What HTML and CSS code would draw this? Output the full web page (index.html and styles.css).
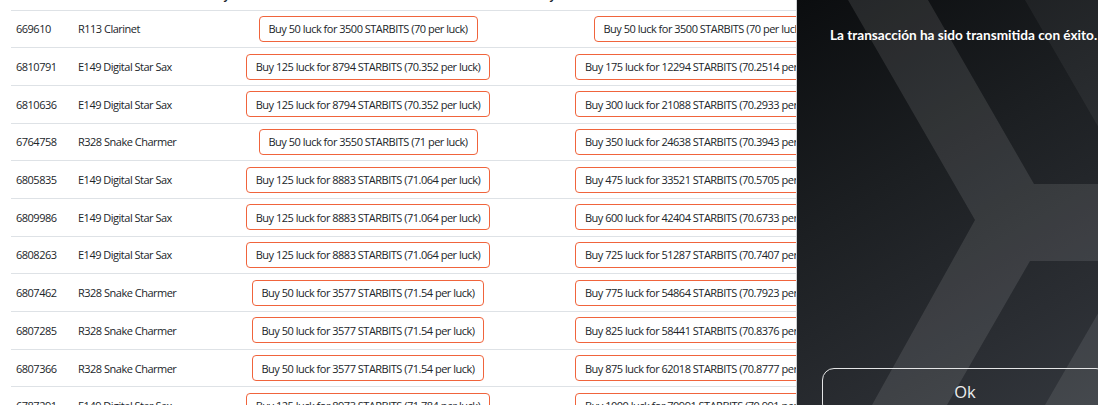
FILE: index.html
```html
<!DOCTYPE html>
<html lang="en">
<head>
    <meta charset="UTF-8">
    <meta name="viewport" content="width=device-width, initial-scale=1.0">
    <title>Luck Market</title>
    <link rel="stylesheet" href="styles.css">
</head>
<body>
    <div class="page">
        <table class="market">
            <thead>
                <tr>
                    <th class="col-id">NFT Id</th>
                    <th class="col-card">Card</th>
                    <th class="col-one">Buy One</th>
                    <th class="col-bulk">Buy Bulk</th>
                </tr>
            </thead>
            <tbody>
                <tr>
                    <td>669610</td>
                    <td>R113 Clarinet</td>
                    <td class="buy-cell"><button class="buy">Buy 50 luck for 3500 STARBITS (70 per luck)</button></td>
                    <td class="buy-cell"><button class="buy">Buy 50 luck for 3500 STARBITS (70 per luck)</button></td>
                </tr>
                <tr>
                    <td>6810791</td>
                    <td>E149 Digital Star Sax</td>
                    <td class="buy-cell"><button class="buy">Buy 125 luck for 8794 STARBITS (70.352 per luck)</button></td>
                    <td class="buy-cell"><button class="buy">Buy 175 luck for 12294 STARBITS (70.2514 per luck)</button></td>
                </tr>
                <tr>
                    <td>6810636</td>
                    <td>E149 Digital Star Sax</td>
                    <td class="buy-cell"><button class="buy">Buy 125 luck for 8794 STARBITS (70.352 per luck)</button></td>
                    <td class="buy-cell"><button class="buy">Buy 300 luck for 21088 STARBITS (70.2933 per luck)</button></td>
                </tr>
                <tr>
                    <td>6764758</td>
                    <td>R328 Snake Charmer</td>
                    <td class="buy-cell"><button class="buy">Buy 50 luck for 3550 STARBITS (71 per luck)</button></td>
                    <td class="buy-cell"><button class="buy">Buy 350 luck for 24638 STARBITS (70.3943 per luck)</button></td>
                </tr>
                <tr>
                    <td>6805835</td>
                    <td>E149 Digital Star Sax</td>
                    <td class="buy-cell"><button class="buy">Buy 125 luck for 8883 STARBITS (71.064 per luck)</button></td>
                    <td class="buy-cell"><button class="buy">Buy 475 luck for 33521 STARBITS (70.5705 per luck)</button></td>
                </tr>
                <tr>
                    <td>6809986</td>
                    <td>E149 Digital Star Sax</td>
                    <td class="buy-cell"><button class="buy">Buy 125 luck for 8883 STARBITS (71.064 per luck)</button></td>
                    <td class="buy-cell"><button class="buy">Buy 600 luck for 42404 STARBITS (70.6733 per luck)</button></td>
                </tr>
                <tr>
                    <td>6808263</td>
                    <td>E149 Digital Star Sax</td>
                    <td class="buy-cell"><button class="buy">Buy 125 luck for 8883 STARBITS (71.064 per luck)</button></td>
                    <td class="buy-cell"><button class="buy">Buy 725 luck for 51287 STARBITS (70.7407 per luck)</button></td>
                </tr>
                <tr>
                    <td>6807462</td>
                    <td>R328 Snake Charmer</td>
                    <td class="buy-cell"><button class="buy">Buy 50 luck for 3577 STARBITS (71.54 per luck)</button></td>
                    <td class="buy-cell"><button class="buy">Buy 775 luck for 54864 STARBITS (70.7923 per luck)</button></td>
                </tr>
                <tr>
                    <td>6807285</td>
                    <td>R328 Snake Charmer</td>
                    <td class="buy-cell"><button class="buy">Buy 50 luck for 3577 STARBITS (71.54 per luck)</button></td>
                    <td class="buy-cell"><button class="buy">Buy 825 luck for 58441 STARBITS (70.8376 per luck)</button></td>
                </tr>
                <tr>
                    <td>6807366</td>
                    <td>R328 Snake Charmer</td>
                    <td class="buy-cell"><button class="buy">Buy 50 luck for 3577 STARBITS (71.54 per luck)</button></td>
                    <td class="buy-cell"><button class="buy">Buy 875 luck for 62018 STARBITS (70.8777 per luck)</button></td>
                </tr>
                <tr>
                    <td>6787291</td>
                    <td>E149 Digital Star Sax</td>
                    <td class="buy-cell"><button class="buy">Buy 125 luck for 8973 STARBITS (71.784 per luck)</button></td>
                    <td class="buy-cell"><button class="buy">Buy 1000 luck for 70991 STARBITS (70.991 per luck)</button></td>
                </tr>
            </tbody>
        </table>
    </div>

    <div class="notice">
        <svg class="notice-bg" viewBox="0 0 336 405" preserveAspectRatio="none">
            <polygon points="228,0 336,187 336,0" fill="rgba(255,255,255,0.05)"/>
            <polygon points="248,405 336,253 336,405" fill="rgba(255,255,255,0.09)"/>
            <polygon points="51,0 131,0 237,184 336,184 336,261 233,261 150,405 75,405 178,220" fill="rgba(255,255,255,0.1)"/>
        </svg>
        <p class="notice-text">La transacción ha sido transmitida con éxito.</p>
        <button class="notice-ok">Ok</button>
    </div>
</body>
</html>
```

FILE: styles.css
```css
* {
    margin: 0;
    padding: 0;
    box-sizing: border-box;
}

body {
    background: #fff;
    font-family: "Open Sans", "Noto Sans", sans-serif;
    font-size: 11px;
    letter-spacing: -0.5px;
    color: #212529;
    overflow: hidden;
    height: 405px;
}

.page {
    margin-top: -28px;
    padding-left: 11px;
}

.market {
    border-collapse: collapse;
    table-layout: fixed;
    width: 864px;
}

.market th {
    text-align: left;
    vertical-align: bottom;
    font-weight: 700;
    height: 38px;
    padding: 0 5px 8px;
    border-bottom: 1px solid #dee2e6;
}

.col-id { width: 62px; }
.col-card { width: 132px; }
.col-one { width: 326px; }
.col-bulk { width: 344px; }

.market td {
    height: 37.7px;
    padding: 0 5px;
    vertical-align: middle;
    border-bottom: 1px solid #dee2e6;
    white-space: nowrap;
}

.market td.buy-cell {
    text-align: center;
}

.buy {
    height: 26px;
    padding: 0 9px;
    background: #fff;
    border: 1px solid #f0643c;
    border-radius: 4px;
    font: inherit;
    letter-spacing: inherit;
    color: #212529;
    white-space: nowrap;
}

/* success drawer */
.notice {
    position: fixed;
    top: 0;
    left: 796px;
    width: 337px;
    height: 405px;
    border-left: 1px solid #cfd1d3;
    background: linear-gradient(150deg, #0b0d0f 0%, #1c1f22 40%, #2a2d32 75%, #34383e 100%);
    overflow: hidden;
    letter-spacing: 0;
}

.notice-bg {
    position: absolute;
    top: 0;
    left: 0;
    width: 336px;
    height: 405px;
}

.notice-text {
    position: relative;
    margin: 27px 0 0 33px;
    font-family: Lato, "Open Sans", sans-serif;
    font-weight: 700;
    font-size: 13.6px;
    color: #fff;
    white-space: nowrap;
}

.notice-ok {
    position: absolute;
    left: 25px;
    right: 25px;
    top: 368px;
    height: 48px;
    background: transparent;
    border: 1px solid #e4e5e6;
    border-radius: 12px;
    color: #eceded;
    font-family: "Open Sans", sans-serif;
    font-size: 16.5px;
    text-align: center;
    padding-bottom: 2px;
}
```
